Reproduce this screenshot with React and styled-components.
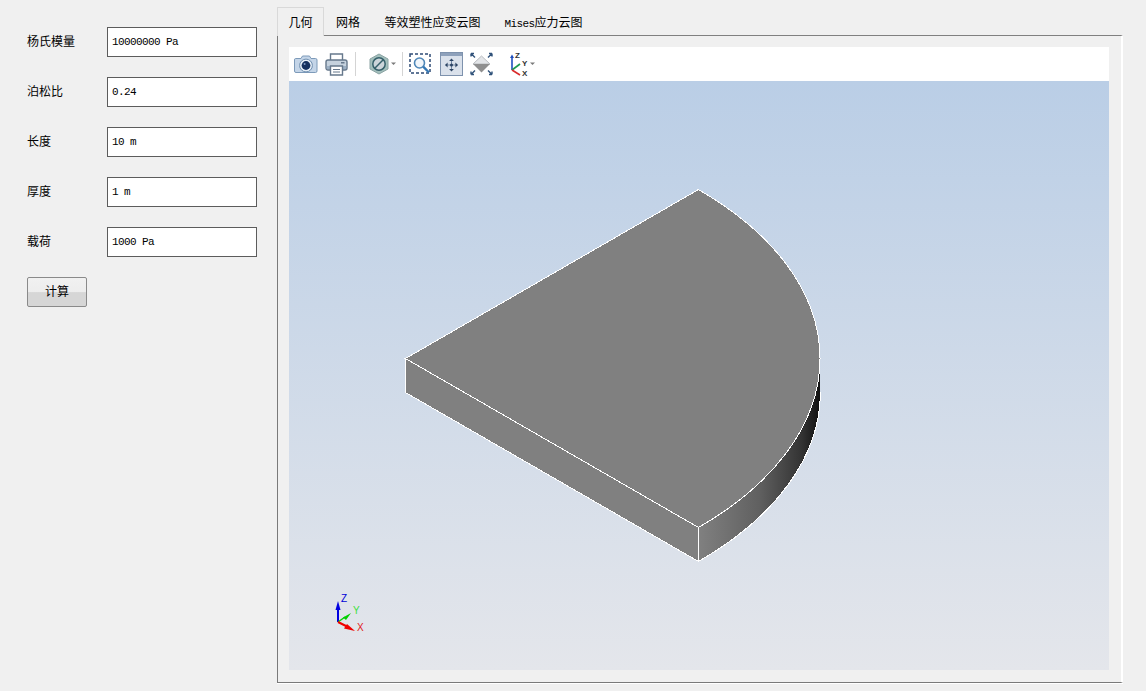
import React from 'react';
import styled, { createGlobalStyle } from 'styled-components';

const GlobalStyle = createGlobalStyle`
    html, body {
        margin: 0;
        padding: 0;
        background: #f0f0f0;
    }
    * {
        box-sizing: border-box;
    }
`
const Window = styled.div`
    width: 1146px;
    height: 691px;
    display: flex;
    overflow: hidden;
    background: #f0f0f0;
    font-family: "Liberation Mono", "Noto Sans CJK SC", monospace;
    color: #000;
`
const Sidebar = styled.div`
    width: 277px;
    flex: none;
    display: flex;
    flex-direction: column;
    align-items: flex-start;
    gap: 20px;
    padding: 27px 0 0 27px;
`
const FieldRow = styled.div`
    display: flex;
    align-items: center;
    height: 30px;
`
const FieldLabel = styled.div`
    width: 80px;
    font-family: "Noto Sans CJK SC", sans-serif;
    font-size: 12px;
    padding-bottom: 4px;
`
const FieldInput = styled.input`
    width: 150px;
    height: 30px;
    padding: 0 0 0 4px;
    border: 1px solid #5c5c5c;
    border-radius: 0;
    background: #fff;
    outline: none;
    font-family: "Liberation Mono", monospace;
    font-size: 11px;
    letter-spacing: -0.6px;
    color: #000;
`
const RunButton = styled.button`
    width: 60px;
    height: 30px;
    padding: 0 0 4px;
    border: 1px solid #8a8a8a;
    border-radius: 2px;
    background: linear-gradient(#f1f1f1 0, #ededed 50%, #d6d6d6 52%, #d6d6d6 100%);
    font-family: "Noto Sans CJK SC", sans-serif;
    font-size: 12px;
    color: #000;
`
const Main = styled.div`
    width: 846px;
    flex: none;
    display: flex;
    flex-direction: column;
    height: 683px;
`
const TabBar = styled.div`
    display: flex;
    align-items: flex-start;
    height: 28px;
    margin-top: 7px;
    flex: none;
`
const Tab = styled.div`
    position: relative;
    z-index: 1;
    height: ${p => (p.$active ? 29 : 28)}px;
    display: flex;
    align-items: center;
    justify-content: center;
    width: ${p => p.$w}px;
    padding-bottom: 1px;
    background: #f0f0f0;
    border: 1px solid ${p => (p.$active ? '#d9d9d9' : 'transparent')};
    border-bottom: 0;
`
const TabLabel = styled.div`
    font-family: "Liberation Mono", monospace;
    font-size: 11px;
    letter-spacing: -0.6px;
    white-space: nowrap;
    span {
        font-family: "Noto Sans CJK SC", sans-serif;
        font-size: 12px;
        letter-spacing: 0;
    }
`
const Pane = styled.div`
    flex: 1;
    display: flex;
    padding: 11px 12px 12px 11px;
    border-style: solid;
    border-width: 1px 2px 1px 1px;
    border-color: #808080 #fff #7a7a7a #7a7a7a;
    box-shadow: 0 1px 0 #fff;
`
const Viewer = styled.div`
    flex: 1;
    display: flex;
    flex-direction: column;
`
const Toolbar = styled.div`
    height: 34px;
    flex: none;
    display: flex;
    align-items: center;
    background: #fff;
    padding-left: 5px;
`
const ToolIcon = styled.svg`
    display: block;
    flex: none;
    width: ${p => p.$w}px;
    height: 26px;
    margin-right: ${p => p.$gap || 0}px;
`
const Separator = styled.div`
    width: 1px;
    height: 24px;
    flex: none;
    background: #d4d4d4;
    margin-right: ${p => p.$gap}px;
`
const Canvas = styled.div`
    flex: 1;
    background: linear-gradient(#bacee6, #e4e6eb);
`
const Scene = styled.svg`
    display: block;
    width: 820px;
    height: 589px;
`

function CameraIcon() {
    return (
        <ToolIcon $w={24} $gap={7} viewBox="0 0 24 26">
            <path d="M2 7.5 h5 l1.5 -2.5 h7 l1.5 2.5 h4.5 q1.5 0 1.5 1.5 v11 q0 1.5 -1.5 1.5 h-19.5 q-1.5 0 -1.5 -1.5 v-11 q0 -1.5 1 -1.5z" fill="#c4d5e8" stroke="#7d9ab9" />
            <circle cx="12" cy="14.5" r="6.4" fill="#e8f0f8" stroke="#6f8fb0" />
            <circle cx="12" cy="14.5" r="4.4" fill="#14305f" />
            <circle cx="10.6" cy="13" r="1" fill="#7f9cc5" />
        </ToolIcon>
    )
}

function PrinterIcon() {
    return (
        <ToolIcon $w={23} $gap={7} viewBox="0 0 23 26">
            <path d="M5.5 9 V3 h12 V9" fill="#fff" stroke="#66788c" strokeWidth="1.4" />
            <rect x="1" y="9" width="21" height="10" rx="2" fill="#c6d2de" stroke="#66788c" strokeWidth="1.4" />
            <rect x="16" y="11" width="3.5" height="1.5" fill="#66788c" />
            <rect x="1.8" y="15" width="19.4" height="3" fill="#9cb0c4" />
            <path d="M5.5 15 h12 v9 h-12z" fill="#fff" stroke="#66788c" strokeWidth="1.4" />
            <path d="M8 18.5 h7 M8 21 h7" stroke="#66788c" />
        </ToolIcon>
    )
}

function HexIcon() {
    return (
        <ToolIcon $w={20} $gap={2} viewBox="0 0 20 26">
            <path d="M10 3 L19 8 V18 L10 23 L1 18 V8 Z" fill="#a3bfbc" stroke="#8aa3a3" />
            <circle cx="10" cy="13" r="6.2" fill="#ccd5da" stroke="#35606a" strokeWidth="1.5" />
            <path d="M5.8 17.2 L14.2 8.8" stroke="#35606a" strokeWidth="1.5" />
        </ToolIcon>
    )
}

function SmallArrow({ gap }) {
    return (
        <ToolIcon $w={5} $gap={gap} viewBox="0 0 5 26">
            <path d="M0 11.5 h5 l-2.5 2.5z" fill="#7a7a7a" />
        </ToolIcon>
    )
}

function ZoomBoxIcon() {
    return (
        <ToolIcon $w={22} $gap={9} viewBox="0 0 22 26">
            <rect x="1" y="3" width="20" height="19" fill="none" stroke="#2e4b75" strokeWidth="1.5" strokeDasharray="3 2" />
            <circle cx="10.5" cy="12" r="5" fill="#f1f6fb" stroke="#4f87b8" strokeWidth="1.6" />
            <path d="M14.2 15.7 L20 21.5" stroke="#3578b5" strokeWidth="2.4" />
        </ToolIcon>
    )
}

function FitViewIcon() {
    return (
        <ToolIcon $w={23} $gap={7} viewBox="0 0 23 26">
            <rect x="0.5" y="1.5" width="22" height="23" fill="#dae1eb" stroke="#7e92ad" />
            <rect x="1" y="2" width="21" height="3" fill="#8ea1bb" />
            <path d="M11.5 8 v12 M5.5 14 h12" stroke="#7287a3" />
            <path d="M11.5 7.5 l2.4 2.6 h-4.8z M11.5 20.5 l2.4 -2.6 h-4.8z M5 14 l2.6 -2.4 v4.8z M18 14 l-2.6 -2.4 v4.8z" fill="#2c4464" />
            <circle cx="11.5" cy="14" r="1.5" fill="#2c4464" />
        </ToolIcon>
    )
}

function IsoIcon() {
    return (
        <ToolIcon $w={23} $gap={16} viewBox="0 0 23 26">
            <path d="M11.5 5 L20 13 H3 Z" fill="#e3e5e8" stroke="#b9bcc0" />
            <path d="M3 13 H20 L11.5 21.5 Z" fill="#8f8f8f" />
            <path d="M1 2.5 L5 6.5 M1 2.5 h3 M1 2.5 v3 M22 2.5 L18 6.5 M22 2.5 h-3 M22 2.5 v3 M1 23.5 L5 19.5 M1 23.5 h3 M1 23.5 v-3 M22 23.5 L18 19.5 M22 23.5 h-3 M22 23.5 v-3" fill="none" stroke="#30527a" strokeWidth="1.4" />
        </ToolIcon>
    )
}

function AxisIcon() {
    return (
        <ToolIcon $w={21} $gap={0} viewBox="0 0 21 26">
            <path d="M3 19 V6" stroke="#1f4fbf" strokeWidth="1.6" />
            <path d="M3 3.5 l2 3.5 h-4z" fill="#1f4fbf" />
            <path d="M3 19 L11 13" stroke="#1e9a50" strokeWidth="1.6" />
            <path d="M3 19 L11 24" stroke="#d92b2b" strokeWidth="1.6" />
            <text x="6" y="7" fontSize="8" fontWeight="700" fontFamily="Liberation Sans, sans-serif" fill="#333">Z</text>
            <text x="13" y="14.5" fontSize="8" fontWeight="700" fontFamily="Liberation Sans, sans-serif" fill="#333">Y</text>
            <text x="13" y="25" fontSize="8" fontWeight="700" fontFamily="Liberation Sans, sans-serif" fill="#333">X</text>
        </ToolIcon>
    )
}

function Model() {
    // page coordinates, the disc is an axis aligned ellipse round the left corner
    return (
        <Scene viewBox="289 81 820 589">
            <defs>
                <linearGradient id="rim" gradientUnits="userSpaceOnUse" x1="699" y1="0" x2="820" y2="0">
                    <stop offset="0" stopColor="#808080" />
                    <stop offset="0.5" stopColor="#606060" />
                    <stop offset="0.85" stopColor="#333333" />
                    <stop offset="1" stopColor="#111111" />
                </linearGradient>
            </defs>
            <g shapeRendering="crispEdges">
                <path d="M698.5 527.5 A414.9 239 0 0 0 820.4 358.5 V392.5 A414.9 239 0 0 1 698.5 561.5 Z" fill="url(#rim)" />
                <path d="M820.4 392.5 A414.9 239 0 0 1 698.5 561.5" fill="none" stroke="#fff" strokeWidth="1" />
                <path d="M405.5 358.5 L698.5 527.5 V561.5 L405.5 392.5 Z" fill="#808080" stroke="#fff" strokeWidth="1" />
                <path d="M405.5 358.5 L698.5 189.5 A414.9 239 0 0 1 698.5 527.5 Z" fill="#808080" stroke="#fff" strokeWidth="1" />
            </g>

            <path d="M338 622 V606" stroke="#0000e0" strokeWidth="2" />
            <path d="M338 601 l2.5 9 h-5z" fill="#0000e0" />
            <path d="M338 622 L345 617" stroke="#00d000" strokeWidth="1.4" />
            <path d="M343 617.5 L351 613 L346 620z" fill="#00d000" />
            <path d="M338 622 L348 627" stroke="#f00000" strokeWidth="2" />
            <path d="M347 624 L355 631 L344 628.5z" fill="#f00000" />
            <text x="341" y="602" fontSize="10" fontFamily="Liberation Sans, sans-serif" fill="#0000d8">Z</text>
            <text x="353" y="614" fontSize="10" fontFamily="Liberation Sans, sans-serif" fill="#40e040">Y</text>
            <text x="357" y="631" fontSize="10" fontFamily="Liberation Sans, sans-serif" fill="#e02020">X</text>
        </Scene>
    )
}

const fields = [
    { label: '杨氏模量', value: '10000000 Pa' },
    { label: '泊松比', value: '0.24' },
    { label: '长度', value: '10 m' },
    { label: '厚度', value: '1 m' },
    { label: '载荷', value: '1000 Pa' },
];

export default function App() {
    return (
        <Window>
            <GlobalStyle />
            <Sidebar>
                {fields.map(f => (
                    <FieldRow key={f.label}>
                        <FieldLabel>{f.label}</FieldLabel>
                        <FieldInput defaultValue={f.value} />
                    </FieldRow>
                ))}
                <RunButton>计算</RunButton>
            </Sidebar>
            <Main>
                <TabBar>
                    <Tab $w={47} $active><TabLabel><span>几何</span></TabLabel></Tab>
                    <Tab $w={48}><TabLabel><span>网格</span></TabLabel></Tab>
                    <Tab $w={121}><TabLabel><span>等效塑性应变云图</span></TabLabel></Tab>
                    <Tab $w={101}><TabLabel>Mises<span>应力云图</span></TabLabel></Tab>
                </TabBar>
                <Pane>
                    <Viewer>
                        <Toolbar>
                            <CameraIcon />
                            <PrinterIcon />
                            <Separator $gap={13} />
                            <HexIcon />
                            <SmallArrow gap={6} />
                            <Separator $gap={6} />
                            <ZoomBoxIcon />
                            <FitViewIcon />
                            <IsoIcon />
                            <AxisIcon />
                            <SmallArrow gap={0} />
                        </Toolbar>
                        <Canvas>
                            <Model />
                        </Canvas>
                    </Viewer>
                </Pane>
            </Main>
        </Window>
    )
}
